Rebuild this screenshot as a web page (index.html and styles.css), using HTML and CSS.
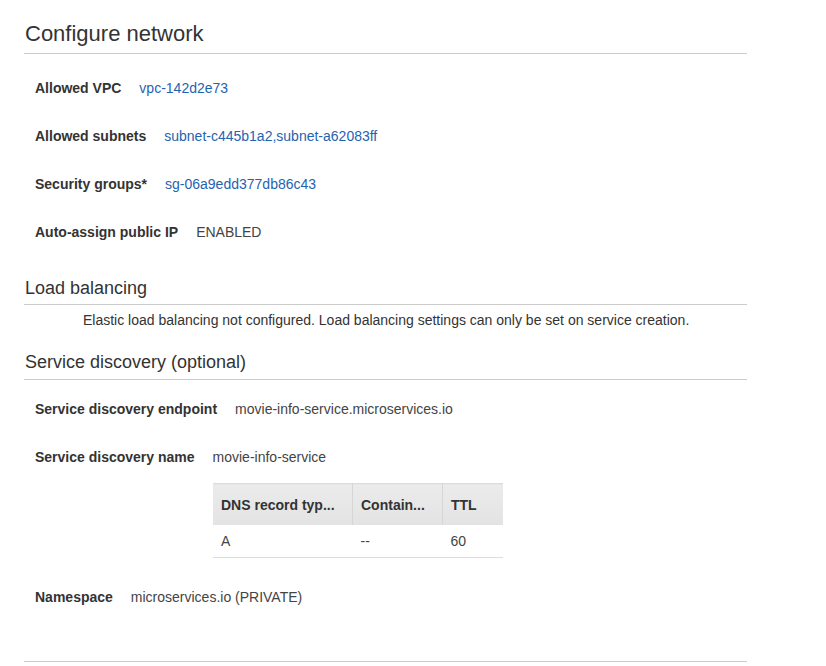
FILE: index.html
```html
<!DOCTYPE html>
<html>
<head>
<meta charset="utf-8">
<link rel="stylesheet" href="styles.css">
</head>
<body>
<div class="page">
  <h1 class="title">Configure network</h1>
  <div class="row"><span class="label">Allowed VPC</span><a class="link">vpc-142d2e73</a></div>
  <div class="row"><span class="label">Allowed subnets</span><a class="link">subnet-c445b1a2,subnet-a62083ff</a></div>
  <div class="row"><span class="label">Security groups*</span><a class="link">sg-06a9edd377db86c43</a></div>
  <div class="row"><span class="label">Auto-assign public IP</span><span class="value">ENABLED</span></div>

  <h2 class="section lb">Load balancing</h2>
  <p class="desc">Elastic load balancing not configured. Load balancing settings can only be set on service creation.</p>

  <h2 class="section sd">Service discovery (optional)</h2>
  <div class="row"><span class="label">Service discovery endpoint</span><span class="value">movie-info-service.microservices.io</span></div>
  <div class="row"><span class="label">Service discovery name</span><span class="value">movie-info-service</span></div>
  <table class="dns">
    <thead>
      <tr><th class="c1">DNS record typ...</th><th class="c2">Contain...</th><th class="c3">TTL</th></tr>
    </thead>
    <tbody>
      <tr><td>A</td><td>--</td><td>60</td></tr>
    </tbody>
  </table>
  <div class="row ns"><span class="label">Namespace</span><span class="value">microservices.io (PRIVATE)</span></div>
  <div class="footer-line"></div>
</div>
</body>
</html>
```
FILE: styles.css
```css
html, body {
  margin: 0;
  padding: 0;
  background: #fff;
}
body {
  font-family: "Liberation Sans", Arial, sans-serif;
  color: #333;
}
.page {
  width: 723px;
  margin-left: 24px;
}
.title {
  margin: 0;
  padding: 21px 0 6px 1px;
  font-size: 22px;
  line-height: 26px;
  font-weight: normal;
  color: #333;
  border-bottom: 1px solid #cccccc;
}
.row {
  display: flex;
  align-items: center;
  height: 48px;
  padding-left: 11px;
  font-size: 14px;
}
.title + .row {
  margin-top: 10px;
}
.label {
  font-weight: bold;
  color: #333;
  margin-right: 18px;
}
.link {
  color: #1f63b0;
  text-decoration: none;
}
.value {
  color: #444;
}
.section {
  margin: 0;
  font-size: 18px;
  line-height: 22px;
  font-weight: normal;
  color: #333;
  padding-left: 1px;
  border-bottom: 1px solid #cccccc;
}
.lb {
  margin-top: 21px;
  padding-bottom: 5px;
}
.sd {
  margin-top: 21px;
  padding-bottom: 6px;
}
.sd + .row {
  margin-top: 5px;
}
.desc {
  margin: 0;
  padding: 5px 0 0 59px;
  font-size: 14px;
  line-height: 20px;
  color: #333;
}
.dns {
  margin: 2px 0 0 189px;
  border-collapse: collapse;
  font-size: 14px;
  table-layout: fixed;
  width: 290px;
}
.dns th {
  height: 40px;
  padding: 1px 0 0 8px;
  text-align: left;
  font-weight: bold;
  color: #333;
  background: linear-gradient(#ebebeb, #e3e3e3);
  border-top: 1px solid #dcdcdc;
  border-left: 1px solid #f4f4f4;
  border-right: 1px solid #d6d6d6;
}
.dns th.c1 { width: 131px; border-left: none; }
.dns th.c2 { width: 81px; }
.dns th.c3 { width: 52px; border-right: none; }
.dns td {
  height: 31px;
  padding: 0 0 1px 8px;
  color: #444;
  border-bottom: 1px solid #dddddd;
}
.ns {
  margin-top: 15px;
}
.footer-line {
  margin-top: 40px;
  border-top: 1px solid #cccccc;
}
```
